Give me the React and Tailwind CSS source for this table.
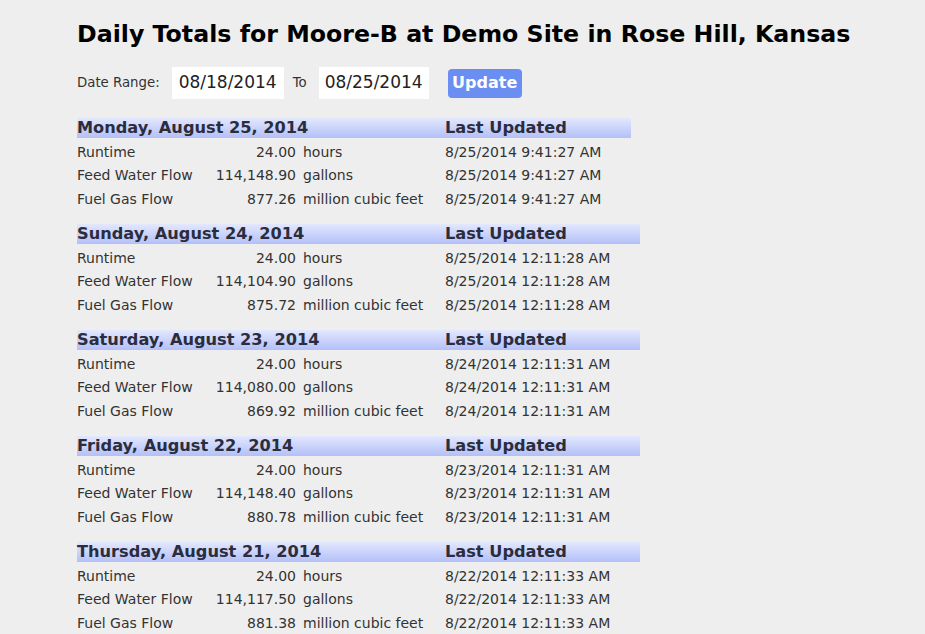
const days = [
  {
    day: 'Monday, August 25, 2014',
    rows: [
      ['Runtime', '24.00', 'hours', '8/25/2014 9:41:27 AM'],
      ['Feed Water Flow', '114,148.90', 'gallons', '8/25/2014 9:41:27 AM'],
      ['Fuel Gas Flow', '877.26', 'million cubic feet', '8/25/2014 9:41:27 AM'],
    ],
  },
  {
    day: 'Sunday, August 24, 2014',
    rows: [
      ['Runtime', '24.00', 'hours', '8/25/2014 12:11:28 AM'],
      ['Feed Water Flow', '114,104.90', 'gallons', '8/25/2014 12:11:28 AM'],
      ['Fuel Gas Flow', '875.72', 'million cubic feet', '8/25/2014 12:11:28 AM'],
    ],
  },
  {
    day: 'Saturday, August 23, 2014',
    rows: [
      ['Runtime', '24.00', 'hours', '8/24/2014 12:11:31 AM'],
      ['Feed Water Flow', '114,080.00', 'gallons', '8/24/2014 12:11:31 AM'],
      ['Fuel Gas Flow', '869.92', 'million cubic feet', '8/24/2014 12:11:31 AM'],
    ],
  },
  {
    day: 'Friday, August 22, 2014',
    rows: [
      ['Runtime', '24.00', 'hours', '8/23/2014 12:11:31 AM'],
      ['Feed Water Flow', '114,148.40', 'gallons', '8/23/2014 12:11:31 AM'],
      ['Fuel Gas Flow', '880.78', 'million cubic feet', '8/23/2014 12:11:31 AM'],
    ],
  },
  {
    day: 'Thursday, August 21, 2014',
    rows: [
      ['Runtime', '24.00', 'hours', '8/22/2014 12:11:33 AM'],
      ['Feed Water Flow', '114,117.50', 'gallons', '8/22/2014 12:11:33 AM'],
      ['Fuel Gas Flow', '881.38', 'million cubic feet', '8/22/2014 12:11:33 AM'],
    ],
  },
]

const DayTable = ({ day, rows }) => (
  <table className="border-collapse mb-[15.5px] text-[14px] leading-[20px] text-[#333]">
    <thead>
      <tr className="h-[20px] bg-gradient-to-b from-[#e3e8fd] to-[#b3bff8] text-[16.2px] font-bold text-[#2b2d3c]">
        <td colSpan={3} className="p-0 leading-[20px] text-left">{day}</td>
        <td className="p-0 pr-[30px] leading-[20px] text-left">Last Updated</td>
      </tr>
    </thead>
    <tbody>
      {rows.map(([label, value, unit, updated]) => (
        <tr key={label} className="h-[23.5px]">
          <td className="p-0 pt-[3.5px] w-[130px]">{label}</td>
          <td className="p-0 pt-[3.5px] w-[89px] text-right">{value}</td>
          <td className="p-0 pt-[3.5px] pl-[7px] w-[149px]">{unit}</td>
          <td className="p-0 pt-[3.5px] pr-[30px]">{updated}</td>
        </tr>
      ))}
    </tbody>
  </table>
)

export default function App() {
  return (
    <div className="min-h-[634px] bg-[#eeeeee] pl-[77px] pt-[19px] font-['DejaVu_Sans',Verdana,sans-serif]">
      <h1 className="text-[23.7px] font-bold text-black leading-[30px]">
        Daily Totals for Moore-B at Demo Site in Rose Hill, Kansas
      </h1>

      <div className="flex items-center mt-[18px] mb-[19px] text-[13.3px] text-[#333]">
        <span>Date Range:</span>
        <div className="ml-[12px] w-[112px] h-[32px] bg-white flex items-center justify-center text-[17px] text-[#222]">
          08/18/2014
        </div>
        <span className="ml-[9px]">To</span>
        <div className="ml-[12px] w-[110px] h-[32px] bg-white flex items-center justify-center text-[17px] text-[#222]">
          08/25/2014
        </div>
        <button className="ml-[19px] w-[74px] h-[29px] rounded-[4px] bg-[#6b8ef2] text-white font-bold text-[16px] flex items-center justify-center">
          Update
        </button>
      </div>

      {days.map((d) => (
        <DayTable key={d.day} {...d} />
      ))}
    </div>
  )
}
